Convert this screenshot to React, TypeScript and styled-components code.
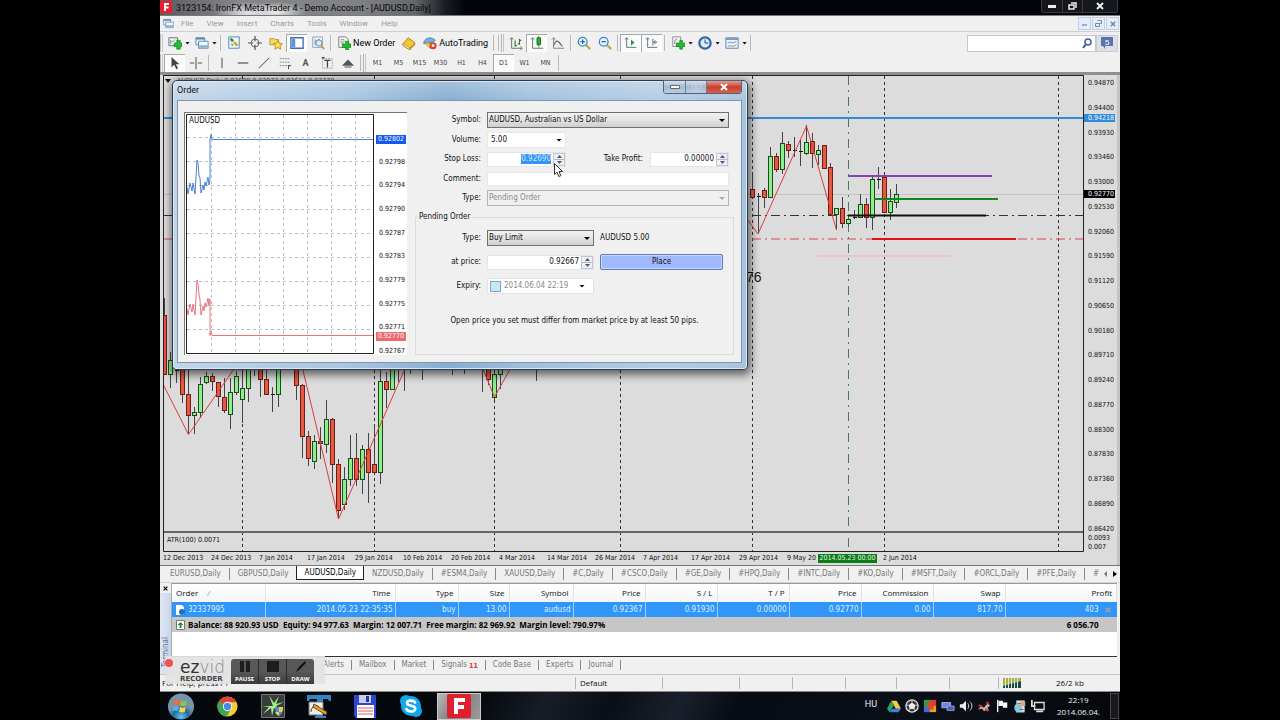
import React, { useEffect, useRef } from "react";
import styled, { createGlobalStyle, css } from "styled-components";

const tahoma = '"DejaVu Sans Condensed", "DejaVu Sans", sans-serif';
const segoe = '"Open Sans", "Noto Sans", sans-serif';
const menuFont = 'Roboto, "Open Sans", sans-serif';

const GlobalStyle = createGlobalStyle`
  *, *::before, *::after { box-sizing: border-box; }
  body { margin: 0; background: #000; }
  button, input, select { font: inherit; color: inherit; margin: 0; padding: 0; border: 0; border-radius: 0; outline: 0; background: none; }
  button { cursor: pointer; }
  svg { display: block; }
`;

const Desktop = styled.div`
  position: relative;
  display: flex;
  flex-direction: column;
  width: 75%;
  min-height: 100vh;
  margin: 0 auto;
  overflow: hidden;
  background: #f0f0f0;
  color: #111;
  font: 8px/10px ${tahoma};
`;

/* ---------- application frame ---------- */

const TitleBar = styled.header`
  display: flex;
  align-items: center;
  height: 16px;
  border-bottom: 1px solid #77797d;
  background:
    radial-gradient(ellipse 34px 11px at 88px 13px, #e8e4e6, transparent),
    radial-gradient(ellipse 30px 10px at 116px 12px, #f0f0f0, transparent),
    linear-gradient(90deg, #5d5d60 0, #85868a 80px, #808185 200px, #64666b 255px, #1b1d22 285px, #020409 305px);
`;
const AppMark = styled.svg`
  width: 12px;
  height: 12px;
  margin: 0 4px 1px 0;
`;
const AppTitle = styled.h1`
  flex: 1;
  margin: 0;
  font: 9px/12px ${menuFont};
  color: #050505;
  white-space: nowrap;
`;
const Captions = styled.div`
  display: flex;
  height: 13px;
  align-self: flex-start;
  margin-right: 2px;
  border: 1px solid #3a3c42;
  border-top: 0;
  border-radius: 0 0 3px 3px;
  background: #15171c;
`;
const CaptionButton = styled.button<{ $wide?: boolean }>`
  display: grid;
  place-items: center;
  width: ${(p) => (p.$wide ? 35 : 20)}px;
  & + & { border-left: 1px solid #3a3c42; }
`;

const MenuBar = styled.nav`
  display: flex;
  align-items: center;
  height: 16px;
  padding: 0 1px 0 3px;
  border-bottom: 1px solid #cfcfcf;
  font: 8px/12px ${menuFont};
  color: #9a9a9a;
`;
const MenuItem = styled.button`
  padding: 0 6px 0 7px;
`;
const Grow = styled.div`
  flex: 1;
`;
const ChildButton = styled.button`
  display: grid;
  place-items: center;
  width: 13px;
  height: 13px;
  margin-left: 1px;
  border: 1px solid #bcd0e4;
  background: #e4eefa;
`;

const ToolBar = styled.div`
  display: flex;
  align-items: center;
  height: 20px;
  padding-top: 2px;
`;
const Grip = styled.i`
  width: 4px;
  height: 18px;
  border-left: 1px solid #b4b4b4;
  background: linear-gradient(90deg, #f0f0f0 1px, #c6c6c6 1px, #c6c6c6 2px, #f0f0f0 2px);
`;
const Divider = styled.i`
  width: 1px;
  height: 16px;
  margin: 0 2px;
  background: #b9b9b9;
`;
const Tool = styled.button<{ $on?: boolean }>`
  display: flex;
  align-items: center;
  justify-content: center;
  min-width: 21px;
  height: 18px;
  ${(p) => p.$on && css`
    background: #fafafa;
    box-shadow: inset 1px 1px #a8a8a8, inset -1px -1px #fff;
  `}
`;
const LabelledTool = styled(Tool)`
  padding: 0 3px 0 4px;
  gap: 2px;
  font: 9px/12px ${menuFont};
  color: #000;
`;
const LetterTool = styled(Tool)`
  font: 700 9px/12px ${menuFont};
  color: #555;
`;
const Period = styled(Tool)`
  font: 7px/10px ${tahoma};
  color: #444;
`;
const Caret = styled.i`
  width: 5px;
  height: 3px;
  margin: 0 1px 0 0;
  background: #111;
  clip-path: polygon(0 0, 100% 0, 50% 100%);
`;
const Search = styled.label`
  display: flex;
  align-items: center;
  width: 129px;
  height: 17px;
  padding-right: 3px;
  border: 1px solid #c4c8ce;
  background: #fff;
  input { flex: 1; min-width: 0; }
`;
const Chat = styled.button`
  display: grid;
  place-items: center;
  width: 22px;
  height: 17px;
  margin-right: 2px;
  background: #dcdfe5;
  border: 1px solid #c9ccd2;
`;

/* ---------- price chart ---------- */

const Workspace = styled.main`
  display: grid;
  grid-template-columns: minmax(0, 1fr) 33px;
  padding: 0 3px;
  border-top: 3px solid #8e8e8e;
  background: linear-gradient(90deg, #dcdcdc 50%, #c4c4c4 50%);
`;
const Plot = styled.svg`
  width: 100%;
  height: 477px;
  background: #dcdcdc;
`;
const PriceAxis = styled.div`
  position: relative;
  display: flex;
  flex-direction: column;
  justify-content: space-between;
  height: 477px;
  padding: 4px 0 1px 4px;
  background: #dcdcdc;
  font: 7px/8px ${tahoma};
`;
const PriceScale = styled.div`
  display: flex;
  flex-direction: column;
  justify-content: space-between;
  height: 454px;
`;
const PriceFlag = styled.output<{ $top: number; $color: string }>`
  position: absolute;
  left: 0;
  right: 2px;
  top: ${(p) => p.$top}px;
  padding-left: 4px;
  background: ${(p) => p.$color};
  color: #f4f8ff;
`;
const TimeAxis = styled.div`
  position: relative;
  grid-column: 1 / -1;
  display: grid;
  grid-template-columns: repeat(16, 48px);
  height: 13px;
  background: #dcdcdc;
  font: 7px/13px ${tahoma};
  white-space: nowrap;
`;
const TimeFlag = styled.output`
  position: absolute;
  left: 655px;
  top: 2px;
  width: 59px;
  background: #0b7d16;
  color: #e6f5e6;
  text-align: center;
  line-height: 9px;
`;

const ChartTabs = styled.nav`
  display: flex;
  align-items: center;
  height: 18px;
  border-top: 1px solid #777;
  border-bottom: 1px solid #d5d5d5;
  padding-left: 2px;
  overflow: hidden;
  white-space: nowrap;
`;
const ChartTab = styled.button<{ $active?: boolean }>`
  flex: none;
  height: 12px;
  padding: 0 8px;
  color: #777;
  border-right: 1px solid #888;
  ${(p) => p.$active && css`
    align-self: flex-start;
    height: 14px;
    margin-left: -1px;
    padding: 0 7px;
    color: #000;
    background: #fff;
    border: solid #222;
    border-width: 0 1px 1px;
  `}
`;
const TabMore = styled.div`
  display: flex;
  align-items: center;
  gap: 5px;
  padding-left: 8px;
  color: #777;
`;

/* ---------- terminal ---------- */

const Terminal = styled.section`
  display: flex;
  height: 91px;
  padding-right: 3px;
`;
const TerminalSide = styled.div`
  display: flex;
  flex-direction: column;
  align-items: center;
  width: 12px;
  background: linear-gradient(90deg, #dfe7f2, #c9d6e8);
  border-right: 1px solid #aaa;
  span {
    margin-top: 44px;
    writing-mode: vertical-rl;
    transform: rotate(180deg);
    color: #54709a;
  }
`;
const CloseMini = styled.button`
  width: 11px;
  height: 10px;
  background: #f0f0f0;
  display: grid;
  place-items: center;
`;
const TerminalBody = styled.div`
  flex: 1;
  min-width: 0;
  display: flex;
  flex-direction: column;
`;
const TableArea = styled.div`
  flex: 1;
  background: #fff;
  border-top: 1px solid #999;
  border-bottom: 1px solid #333;
`;
const Trades = styled.table`
  width: 100%;
  table-layout: fixed;
  border-collapse: collapse;
  white-space: nowrap;
  th, td { padding: 0 4px; text-align: right; }
  th { height: 18px; font: 8px/12px ${segoe}; background: linear-gradient(#fff, #f4f5f7); border-right: 1px solid #e2e4e8; }
  th:first-child, td:first-child { text-align: left; }
  tbody td { height: 15px; padding-right: 2px; background: #3096fa; color: #dcefff; border-right: 1px solid #9fd0ff; }
  tfoot td { height: 15px; background: #c6c6c6; color: #000; font: 700 8px/12px ${segoe}; }
  tbody td:last-child, tfoot td:last-child { border: 0; padding-right: 6px; }
  tfoot td:last-child { padding-right: 18px; }
`;
const Iconed = styled.span`
  display: flex;
  align-items: center;
  gap: 3px;
`;
const ProfitCell = styled.span`
  display: flex;
  justify-content: flex-end;
  align-items: center;
  gap: 6px;
`;
const SortMark = styled.i`
  margin-left: 9px;
  color: #999;
`;
const TerminalTabs = styled.nav`
  display: flex;
  align-items: center;
  height: 17px;
  padding: 0 0 2px 144px;
  color: #777;
  white-space: nowrap;
`;
const TerminalTab = styled.button`
  height: 10px;
  padding: 0 7px;
  border-right: 1px solid #888;
  sub { margin-left: 2px; font-size: 7px; font-weight: 700; color: #d33; vertical-align: -1px; line-height: 7px; }
`;

const StatusBar = styled.footer`
  display: grid;
  grid-template-columns: 415px 87px 77px 53px 53px 51px 53px 49px 1fr;
  align-items: center;
  height: 18px;
  border-top: 1px solid #c4c4c4;
  border-bottom: 1px solid #888;
  font: 8px/12px ${segoe};
`;
const StatusCell = styled.div`
  display: flex;
  align-items: center;
  gap: 35px;
  height: 12px;
  padding-left: 4px;
  & + & { border-left: 1px solid #b5b5b5; }
`;
const StatusHelp = styled(StatusCell)`
  padding-left: 2px;
  border-left: 0;
`;

/* ---------- taskbar ---------- */

const TaskBar = styled.footer`
  display: flex;
  align-items: center;
  flex: 1;
  min-height: 28px;
  background: linear-gradient(115deg, #05080d 0 33%, #171c26 40%, #0a0e16 47%, #1a202b 54%, #070b13 60%, #0b1019 82%, #05070a);
  color: #eee;
  font: 8px/12px ${segoe};
`;
const TaskButton = styled.button<{ $on?: boolean }>`
  display: grid;
  place-items: center;
  width: 46px;
  height: 27px;
  &:first-child { width: 41px; margin-right: 3px; }
  ${(p) => p.$on && css`
    width: 44px;
    margin-left: 3px;
    background: linear-gradient(120deg, #b9b9b9, #808080 45%, #9a9a9a);
    border: 1px solid #ccc;
  `}
`;
const Tray = styled.div`
  display: flex;
  align-items: center;
  gap: 4px;
`;
const Language = styled.span`
  margin-right: 6px;
  padding-bottom: 4px;
  font: 9px/12px ${menuFont};
`;
const Clock = styled.time`
  width: 64px;
  padding: 0 0 1px 3px;
  text-align: center;
`;
const ShowDesktop = styled.button`
  width: 9px;
  height: 26px;
  margin: 0 1px;
  border: 1px solid #444;
  background: #17191d;
`;

/* ---------- order dialog ---------- */

const Dialog = styled.section`
  position: absolute;
  left: 12px;
  top: 80px;
  width: 576px;
  height: 290px;
  display: flex;
  flex-direction: column;
  padding: 0 5px 6px 4px;
  border: 1px solid #2e3a4a;
  border-radius: 5px 5px 4px 4px;
  background:
    linear-gradient(rgba(255,255,255,.25), transparent 20px),
    linear-gradient(90deg, #c3d5e8, #a9c6e2 30%, #86aed2 48%, #a0c0de 62%, #b5cce4 85%, #a9c4de);
  box-shadow: inset 0 0 0 1px #d9e8f6, 1px 3px 8px 2px rgba(0, 0, 0, 0.55);
`;
const DialogHead = styled.header`
  display: flex;
  justify-content: space-between;
  height: 20px;
  h2 { margin: 2px 0 0; font: 9px/14px ${menuFont}; color: #111; }
`;
const DialogCaptions = styled.div`
  display: flex;
  height: 14px;
  margin-top: -1px;
  border: 1px solid #51637a;
  border-radius: 0 0 3px 3px;
  overflow: hidden;
`;
const DialogButton = styled.button<{ $close?: boolean }>`
  display: grid;
  place-items: center;
  width: ${(p) => (p.$close ? 35 : 21)}px;
  background: ${(p) => (p.$close ? "linear-gradient(#e0a090, #c8402c 50%, #d8604a)" : "linear-gradient(#d6e2ee, #a5bad0 50%, #bccde0)")};
  & + & { border-left: 1px solid #6c7f95; }
`;
const Client = styled.div`
  flex: 1;
  display: flex;
  gap: 6px;
  padding: 11px 7px 7px 6px;
  border: 1px solid #8296ab;
  background: #f0f0f0;
`;
const TickPanel = styled.div`
  display: flex;
  width: 223px;
  background: #fff;
  border-top: 1px solid #777;
  border-left: 1px solid #777;
`;
const TickAxis = styled.div`
  position: relative;
  flex: 1;
  display: flex;
  flex-direction: column;
  justify-content: space-between;
  padding: 21px 0 0 3px;
  font: 7px/8px ${tahoma};
`;
const TickFlag = styled(PriceFlag)`
  right: 1px;
  padding-left: 2px;
  line-height: 9px;
`;
const Form = styled.form`
  flex: 1;
  display: flex;
  flex-direction: column;
`;
const MainFields = styled.div`
  display: flex;
  flex-direction: column;
  justify-content: space-between;
  height: 94px;
`;
const Row = styled.div<{ $label: number }>`
  display: flex;
  align-items: center;
  height: 16px;
  padding-right: 5px;
  > label:first-child {
    width: ${(p) => p.$label}px;
    margin-right: 6px;
    text-align: right;
  }
`;
const Picker = styled.span<{ $width?: number; $flat?: boolean; $off?: boolean }>`
  position: relative;
  display: flex;
  ${(p) => (p.$width ? `width: ${p.$width}px;` : "flex: 1;")}
  height: 16px;
  border: 1px solid ${(p) => (p.$flat ? "#e8e8e8" : p.$off ? "#b5b5b5" : "#707070")};
  background: ${(p) => (p.$flat ? "#fff" : p.$off ? "#f0f0f0" : "linear-gradient(#f2f2f2, #e4e4e4 50%, #cfcfcf)")};
  color: ${(p) => (p.$off ? "#8a8a8a" : "#111")};
  select { appearance: none; flex: 1; min-width: 0; padding-left: ${(p) => (p.$flat ? 3 : 1)}px; opacity: 1; color: inherit; }
  &::after {
    content: "";
    position: absolute;
    right: 3px;
    top: 6px;
    width: 6px;
    height: 3px;
    background: ${(p) => (p.$off ? "#aaa" : "#000")};
    clip-path: polygon(0 0, 100% 0, 50% 100%);
    pointer-events: none;
  }
`;
const TextField = styled.input`
  flex: 1;
  min-width: 0;
  height: 14px;
  background: #fff;
  border: 1px solid #e6e6e6;
`;
const NumberField = styled.span<{ $width: number }>`
  display: flex;
  width: ${(p) => p.$width}px;
  height: 15px;
  background: #fff;
  border: 1px solid #e2e5ea;
  input {
    flex: 1;
    min-width: 0;
    padding-right: 2px;
    text-align: right;
  }
  input::selection { background: #3096fa; color: #cfe6ff; }
`;
const Spin = styled.span`
  display: flex;
  flex-direction: column;
  width: 12px;
  border: 1px solid #c3c7cd;
  background: #eef0f3;
`;
const SpinButton = styled.button`
  flex: 1;
  display: grid;
  place-items: center;
  & + & { border-top: 1px solid #b4b8c0; }
`;
const SideLabel = styled.label`
  flex: 1;
  margin-right: 7px;
  text-align: right;
`;
const Pending = styled.fieldset`
  flex: 1;
  display: flex;
  flex-direction: column;
  gap: 8px;
  min-width: 0;
  margin: 6px 0 0 2px;
  padding: 8px 0 0;
  border: 1px solid #dadada;
  legend { margin-left: 2px; padding: 0 1px; }
`;
const RowNote = styled.span`
  margin-left: 6px;
`;
const PlaceButton = styled.button`
  width: 123px;
  height: 16px;
  margin-left: 6px;
  border: 1px solid #5f7bb5;
  border-radius: 2px;
  background: #9fb9fb;
  box-shadow: inset 0 0 0 1px #c4d4fd;
`;
const DateField = styled.span`
  position: relative;
  display: flex;
  align-items: center;
  width: 107px;
  height: 16px;
  padding-left: 2px;
  background: #fff;
  border: 1px solid #e4e4e4;
  color: #8a8a8a;
  input[type="checkbox"] {
    appearance: none;
    width: 11px;
    height: 11px;
    margin-right: 3px;
    border: 1px solid #7aa7c4;
    background: #c9e6f6;
  }
  input[type="text"] { width: 64px; }
`;
const DateCaret = styled(Caret)`
  width: 6px;
  margin-left: 11px;
`;
const Hint = styled.p`
  margin: 14px 0 0;
  text-align: center;
`;
const Pointer = styled.svg`
  position: absolute;
  left: 394px;
  top: 163px;
`;

/* ---------- screen recorder overlay ---------- */

const Recorder = styled.aside`
  position: absolute;
  left: 5px;
  top: 656px;
  display: flex;
  justify-content: space-between;
  width: 160px;
  height: 28px;
  padding: 3px 11px 0 0;
  background: rgba(226, 226, 226, 0.94);
`;
const RecorderDot = styled.i`
  width: 8px;
  height: 8px;
  border-radius: 50%;
  background: #f25055;
`;
const RecorderBrand = styled.div`
  flex: 1;
  padding-left: 7px;
  color: #333;
  font: 17px/17px "DejaVu Sans", sans-serif;
  span { font-weight: 200; color: #888; }
  small { display: block; font: 700 7px/6px "DejaVu Sans", sans-serif; color: #444; }
`;
const RecorderKeys = styled.div`
  display: flex;
  width: 83px;
  border-radius: 3px 3px 0 0;
  background: linear-gradient(#585858 50%, #3c3c3c);
`;
const RecorderKey = styled.button`
  flex: 1;
  display: flex;
  flex-direction: column;
  align-items: center;
  justify-content: space-between;
  padding-top: 1px;
  color: #fff;
  font: 700 6px/10px ${segoe};
  & + & { border-left: 1px solid #2c2c2c; }
`;

/* ---------- icons ---------- */

const glyphs: Record<string, React.ReactNode> = {
  newChart: <><path d="M1 2h10v9H1z" fill="#eef5ee" stroke="#667" /><path d="M3 9V5l2 2 3-3" stroke="#39a" fill="none" /><path d="M7 8h3V5h4v3h2v4h-2v3h-4v-3H7z" fill="#1dc02c" stroke="#0a7616" strokeWidth=".7" /></>,
  windows: <><path d="M1 2h10v8H1z" fill="#e8f2fc" stroke="#5b83ad" /><path d="M1 3h10" stroke="#5b83ad" strokeWidth="2" /><path d="M4 6h11v8H4z" fill="#f2f8ff" stroke="#5b83ad" /><path d="M4 12h11" stroke="#8fb3d6" strokeWidth="3" /></>,
  market: <><path d="M2 1h12v13H2z" fill="#eaf4fd" stroke="#4a84b8" /><path d="M4 3l3 3" stroke="#2b9a3a" strokeWidth="3" /><path d="M8 7l4 4" stroke="#d5a622" strokeWidth="3" /><path d="M5 9l2 2" stroke="#7db86a" strokeWidth="2" /></>,
  target: <g stroke="#555" fill="none"><circle cx="8" cy="8" r="4.5" /><path d="M8 0v6M8 10v6M0 8h6M10 8h6" strokeWidth="1.4" /></g>,
  star: <><path d="M1 3h5l1 1h4v6H1z" fill="#f6d873" stroke="#b9922a" /><path d="M10 5l1.6 3.3 3.7.5-2.7 2.5.7 3.7-3.3-1.8L6.700 15l.7-3.700-2.700-2.500 3.700-.5z" fill="#ffdf4a" stroke="#b88a1c" /></>,
  panel: <><path d="M1 2h14v12H1z" fill="#fff" stroke="#3b72ad" strokeWidth="1.500" /><path d="M2 3h4v10H2z" fill="#5a95d3" /></>,
  tester: <><path d="M2 1h11v12H2z" fill="#eef3f8" stroke="#8b9bb0" /><path d="M4 4h2v6H4zM8 3h2v4H8z" fill="#9ab" /><circle cx="9" cy="8" r="3.500" fill="#dcecf9" stroke="#5d7fa3" /><path d="M11.500 10.500L15 15" stroke="#c69b3c" strokeWidth="2" /></>,
  order: <><path d="M2 1h8l3 3v9H2z" fill="#f4f7f4" stroke="#777" /><path d="M4 4h4M4 6h6M4 8h4" stroke="#999" /><path d="M6 9h4V6h3v3h3v4h-3v3h-3v-3H6z" fill="#1dc02c" stroke="#0a7616" strokeWidth=".7" /></>,
  book: <><path d="M1 9L7 2l8 6-6 6z" fill="#f3c63a" stroke="#a97b13" /><path d="M1 9v2l8 5v-2" fill="#fbe9ad" stroke="#a97b13" /><path d="M9 14l6-6v2l-6 6z" fill="#c98e18" /></>,
  auto: <><path d="M1 7c2-6 10-6 13-2l-3 2-10 2z" fill="#6fb4e8" stroke="#3a79ad" /><path d="M2 8l6 6 3-6z" fill="#f2cf58" stroke="#b08c2a" /><circle cx="11.500" cy="11" r="4" fill="#e03a2c" /><path d="M10 9.500h3v3h-3z" fill="#fff" /></>,
  bars: <g stroke="#556b56" fill="none"><path d="M3 2v12h12M1 4l2-2 2 2M13 12l2 2-2 2" /><path d="M7 5v7M7 11h2M12 3v7M12 5h2M10 9h2" stroke="#2d7a35" strokeWidth="1.300" /></g>,
  candles: <><path d="M3 2v12h12M1 4l2-2 2 2M10 0v13" stroke="#556b56" fill="none" /><path d="M8 2h4v8H8z" fill="#25b133" stroke="#0a6e17" /></>,
  line: <g stroke="#777" fill="none"><path d="M3 2v12h12M1 4l2-2 2 2" /><path d="M3 11c3-8 5-6 10 1" stroke="#4f7a55" strokeWidth="1.300" /></g>,
  zoomIn: <><path d="M10 10l5 5" stroke="#c9a24a" strokeWidth="2.500" /><circle cx="6.500" cy="6.500" r="5" fill="#e6f3fd" stroke="#3d86c8" strokeWidth="1.500" /><path d="M4 6.500h5M6.500 4v5" stroke="#2f6cae" strokeWidth="1.500" /></>,
  zoomOut: <><path d="M10 10l5 5" stroke="#c9a24a" strokeWidth="2.500" /><circle cx="6.500" cy="6.500" r="5" fill="#e6f3fd" stroke="#3d86c8" strokeWidth="1.500" /><path d="M4 6.500h5" stroke="#2f6cae" strokeWidth="1.500" /></>,
  scroll: <><path d="M3 2v11h11M1 4l2-2 2 2" stroke="#567" fill="none" /><path d="M8 4v7l4-3.500z" fill="#25a133" /></>,
  shift: <><path d="M3 2v11h11M1 4l2-2 2 2M9 3v8" stroke="#567" fill="none" /><path d="M14 7h-4M12 5l-2 2 2 2" stroke="#456" fill="none" /></>,
  indicators: <><path d="M2 1h9v11H2z" fill="#f4f4f4" stroke="#888" /><path d="M4 9c1-6 2-6 3-5" stroke="#666" fill="none" /><path d="M6 8h4V5h3v3h3v4h-3v3h-3v-3H6z" fill="#1dc02c" stroke="#0a7616" strokeWidth=".7" /></>,
  clock: <><circle cx="8" cy="8" r="6.500" fill="#dcecf9" stroke="#2f66a5" strokeWidth="2.500" /><path d="M8 4v4h4" stroke="#234" fill="none" /></>,
  template: <><path d="M1 2h14v12H1z" fill="#eef4fa" stroke="#5d7ea3" /><path d="M1 3.500h14" stroke="#6f95bd" strokeWidth="2" /><path d="M3 8l3-1 3 1 4-2M3 12l3-1 3 1 4-2" stroke="#789" fill="none" /></>,
  cursor: <path d="M4 1v12l3-3 2.500 5 2-1L9 9.500h4z" fill="#444" />,
  cross: <path d="M8 1v14M1 8h5M10 8h5" stroke="#555" strokeWidth="1.200" />,
  vline: <path d="M8 2v12" stroke="#555" strokeWidth="1.200" />,
  hline: <path d="M2 8h12" stroke="#555" strokeWidth="1.400" />,
  trend: <path d="M2 14L14 2" stroke="#666" strokeWidth="1.200" />,
  fib: <><path d="M2 3h12M2 7h12M2 11h12" stroke="#777" strokeDasharray="2 1" /><path d="M12 15v-4l3 0" stroke="#333" fill="none" /></>,
  label: <><path d="M3 3h11v11H3z" fill="none" stroke="#999" strokeDasharray="2 1" /><path d="M5 5h7M8.500 5v8M2 2h3" stroke="#444" strokeWidth="1.500" /></>,
  arrows: <path d="M1 11l7-7 7 7zM4 12h8v1H4z" fill="#555" />,
};

const Icon = ({ name, size = 14 }: { name: string; size?: number }) => (
  <svg width={size} height={size} viewBox="0 0 16 16" aria-hidden="true">{glyphs[name]}</svg>
);

const XMark = ({ size, color, width = 2 }: { size: number; color: string; width?: number }) => (
  <svg width={size} height={size} viewBox="0 0 8 8"><path d="M1 1l6 6M7 1L1 7" stroke={color} strokeWidth={width} /></svg>
);

/* ---------- data ---------- */

type Candle = [x: number, high: number, top: number, bottom: number, low: number, kind: "u" | "d"];

const candles: Candle[] = [
  [164, 298, 315, 374, 374, "d"], [170, 352, 360, 374, 388, "u"], [176, 360, 370, 370, 383, "u"],
  [182, 366, 368, 394, 403, "d"], [188, 368, 394, 415, 434, "d"], [194, 407, 412, 415, 434, "u"],
  [200, 377, 384, 412, 418, "u"], [206, 372, 376, 382, 384, "u"], [212, 373, 376, 381, 391, "d"],
  [218, 382, 382, 396, 407, "d"], [224, 378, 397, 410, 413, "d"], [230, 378, 392, 414, 429, "u"],
  [236, 371, 376, 392, 395, "u"], [242, 368, 388, 399, 423, "u"], [248, 362, 365, 388, 402, "u"],
  [254, 362, 368, 368, 376, "u"], [260, 360, 365, 379, 397, "d"], [266, 370, 379, 394, 395, "d"],
  [272, 387, 394, 394, 412, "d"], [278, 362, 366, 394, 407, "u"], [296, 360, 362, 385, 400, "d"],
  [302, 384, 385, 436, 458, "d"], [308, 431, 436, 458, 466, "d"], [314, 435, 441, 461, 469, "u"],
  [320, 427, 441, 443, 459, "d"], [326, 400, 419, 444, 453, "u"], [332, 418, 419, 464, 483, "d"],
  [338, 459, 464, 510, 519, "d"], [344, 467, 479, 504, 510, "u"], [350, 435, 458, 479, 486, "u"],
  [356, 433, 458, 479, 486, "d"], [362, 445, 449, 479, 494, "u"], [368, 433, 449, 472, 503, "d"],
  [374, 426, 464, 472, 474, "d"], [380, 370, 381, 472, 484, "u"], [386, 372, 381, 389, 408, "d"],
  [392, 362, 365, 389, 390, "u"], [398, 362, 366, 366, 382, "u"], [404, 362, 366, 366, 391, "u"],
  [410, 362, 366, 366, 374, "u"], [422, 362, 366, 366, 380, "u"], [452, 362, 366, 366, 375, "u"],
  [464, 362, 366, 366, 374, "u"], [482, 362, 366, 366, 392, "u"], [488, 364, 366, 379, 385, "d"],
  [494, 372, 374, 397, 400, "u"], [500, 362, 366, 374, 389, "u"], [536, 362, 366, 366, 381, "u"],
  [752, 173, 189, 197, 198, "d"], [758, 193, 196, 196, 233, "u"], [764, 188, 190, 197, 208, "d"],
  [770, 147, 156, 197, 198, "u"], [776, 153, 156, 169, 172, "d"], [782, 132, 143, 169, 174, "u"],
  [788, 141, 144, 150, 158, "d"], [794, 137, 150, 150, 157, "u"], [800, 139, 151, 151, 166, "u"],
  [806, 125, 142, 153, 155, "u"], [812, 133, 141, 153, 168, "d"], [818, 145, 150, 154, 165, "u"],
  [824, 145, 145, 168, 169, "d"], [830, 163, 167, 214, 215, "d"], [836, 208, 208, 214, 230, "u"],
  [842, 197, 208, 223, 228, "d"], [848, 218, 219, 223, 226, "u"], [854, 210, 217, 217, 219, "u"],
  [860, 194, 204, 217, 218, "u"], [866, 198, 204, 217, 228, "d"], [872, 176, 179, 217, 230, "u"],
  [878, 167, 179, 179, 189, "u"], [884, 176, 177, 212, 213, "d"], [890, 189, 201, 212, 220, "u"],
  [896, 184, 194, 202, 208, "u"],
];

const prices = ["0.94870", "0.94400", "0.93930", "0.93460", "0.93000", "0.92530", "0.92060", "0.91590", "0.91120", "0.90650", "0.90180", "0.89710", "0.89240", "0.88770", "0.88300", "0.87830", "0.87360", "0.86890", "0.86420"];
const dates = ["12 Dec 2013", "24 Dec 2013", "7 Jan 2014", "17 Jan 2014", "29 Jan 2014", "10 Feb 2014", "20 Feb 2014", "4 Mar 2014", "14 Mar 2014", "26 Mar 2014", "7 Apr 2014", "17 Apr 2014", "29 Apr 2014", "9 May 20", "", "2 Jun 2014"];
const months = [242, 374, 494, 620, 752, 884, 1058];
const tabs = ["EURUSD", "GBPUSD", "AUDUSD", "NZDUSD", "#ESM4", "XAUUSD", "#C", "#CSCO", "#GE", "#HPQ", "#INTC", "#KO", "#MSFT", "#ORCL", "#PFE"];
const tickPrices = ["0.92802", "0.92798", "0.92794", "0.92790", "0.92787", "0.92783", "0.92779", "0.92775", "0.92771", "0.92767"];
const columns: [string, number | undefined][] = [["Order", 93], ["Time", 130], ["Type", 63], ["Size", 51], ["Symbol", 64], ["Price", 72], ["S / L", 72], ["T / P", 72], ["Price", 72], ["Commission", 72], ["Swap", 72], ["Profit", undefined]];
const trade = ["2014.05.23 22:35:35", "buy", "13.00", "audusd", "0.92367", "0.91930", "0.00000", "0.92770", "0.00", "817.70"];

/* ---------- pieces ---------- */

const PriceChart = () => (
  <Plot viewBox="163 75 921 477" preserveAspectRatio="xMinYMin meet" role="img" aria-label="AUDUSD daily chart">
    <g stroke="#333" strokeDasharray="3 3" fill="none">
      {months.map((x) => <path key={x} d={`M${x}.5 76V551`} />)}
    </g>
    <path d="M848.500 76V551" stroke="#4a7a5c" strokeDasharray="9 5 2 5" />
    <path d="M163 194.500H1084" stroke="#c2c2c2" />
    <path d="M163 118H1084" stroke="#2f8bdc" strokeWidth="2" />
    <path d="M163 215.500H1084" stroke="#333" strokeDasharray="9 4 2 4" />
    <path d="M163 239H1084" stroke="#d8494c" strokeDasharray="9 4 2 4" />
    <path d="M817 256H951" stroke="#f6bfca" strokeWidth="2" />
    <g stroke="#444" shapeRendering="crispEdges">
      {candles.map(([x, h, t, b, l, k]) => (
        <g key={`${x}-${h}`}>
          <path d={`M${x + 0.5} ${h}V${l}`} />
          {b - t < 1
            ? <path d={`M${x - 1} ${t + 0.5}h4`} stroke="#111" />
            : <rect x={x - 1.5} y={t + 0.5} width="4" height={b - t} fill={k === "u" ? "#8cf08a" : "#e8573f"} stroke={k === "u" ? "#1d4a1d" : "#6a2018"} />}
        </g>
      ))}
    </g>
    <g stroke="#dd3b3f" fill="none">
      <path d="M163 384L188.500 434.500L236 366" />
      <path d="M301 362L338.500 519L408 362" />
      <path d="M480 362L494.500 397L514 362" />
      <path d="M744 215L758 234L806.500 126L836.500 230" />
    </g>
    <g strokeWidth="2">
      <path d="M848 176H992" stroke="#8840b8" />
      <path d="M874 199H998" stroke="#12881c" />
      <path d="M848 215.500H986" stroke="#111" />
      <path d="M872 239H1016" stroke="#e0101c" />
    </g>
    <text x="746" y="282" fontFamily="Liberation Sans, sans-serif" fontSize="14" fill="#111">76</text>
    <text x="177" y="83" fontFamily="DejaVu Sans Condensed, sans-serif" fontSize="7" fill="#555">AUDUSD,Daily  0.92699 0.92977 0.92611 0.92770</text>
    <path d="M165 79h6l-3 4z" fill="#111" />
    <path d="M163 532H1084" stroke="#666" strokeWidth="2" />
    <text x="167" y="542" fontFamily="DejaVu Sans Condensed, sans-serif" fontSize="7" fill="#111">ATR(100) 0.0071</text>
    <path d="M163.500 551.500V75.500H1083.500V551.500z" stroke="#222" fill="none" />
  </Plot>
);

const TickChart = () => (
  <svg width="191" height="242" viewBox="0 0 191 242" role="img" aria-label="AUDUSD tick chart">
    <g stroke="#bdbdc4" strokeDasharray="3 3">
      {[26, 50, 74, 98, 122, 146, 170].map((x) => <path key={x} d={`M${x}.5 2V240`} />)}
      {[24, 48, 72, 96, 120, 144, 168, 192, 216].map((y) => <path key={y} d={`M2 ${y}.5H189`} />)}
    </g>
    <path d="M2 74l1 7 2-11 2 8 1-8 2 11 2-34 1 3 1 13 1 2 1 15 2-8 1 5 1-8 1 4 2-9 1 8 1-5V26.500l1-5 1 5H189" fill="none" stroke="#4a82d8" />
    <path d="M2 196l1 6 2-11 2 8 1-8 2 11 2-35 1 4 1 10 1 6 1 15 2-9 1 5 1-8 1 4 2-9 1 8 1-7V222.500l1-4 1 4H189" fill="none" stroke="#e8777c" />
    <path d="M1.500 1.500H188.500V240.500H1.500z" fill="none" stroke="#222" />
    <text x="4" y="10" fontFamily="DejaVu Sans Condensed, sans-serif" fontSize="8" fill="#111">AUDUSD</text>
  </svg>
);

const Spinner = () => (
  <Spin>
    <SpinButton type="button" aria-label="Increase"><svg width="5" height="3"><path d="M0 3h5L2.500 0z" fill="#4a5a7a" /></svg></SpinButton>
    <SpinButton type="button" aria-label="Decrease"><svg width="5" height="3"><path d="M0 0h5L2.500 3z" fill="#4a5a7a" /></svg></SpinButton>
  </Spin>
);

const OrderDialog = () => {
  const stopLoss = useRef<HTMLInputElement>(null);
  useEffect(() => {
    stopLoss.current?.focus();
    stopLoss.current?.select();
  }, []);
  return (
    <Dialog role="dialog" aria-label="Order">
      <DialogHead>
        <h2>Order</h2>
        <DialogCaptions>
          <DialogButton aria-label="Minimize"><svg width="10" height="4"><path d="M.5.5h9v3h-9z" fill="#fff" stroke="#666" /></svg></DialogButton>
          <DialogButton aria-label="Maximize"><svg width="9" height="7"><path d="M.5.5h8v6h-8zM3.500 2.500h2v2h-2z" fill="none" stroke="#c9d3df" /></svg></DialogButton>
          <DialogButton $close aria-label="Close"><XMark size={8} color="#fff" /></DialogButton>
        </DialogCaptions>
      </DialogHead>
      <Client>
        <TickPanel>
          <TickChart />
          <TickAxis>
            {tickPrices.map((p) => <span key={p}>{p}</span>)}
            <TickFlag $top={22} $color="#1458f0">0.92802</TickFlag>
            <TickFlag $top={219} $color="#f0696c">0.92770</TickFlag>
          </TickAxis>
        </TickPanel>
        <Form onSubmit={(e) => e.preventDefault()}>
          <MainFields>
            <Row $label={68}>
              <label htmlFor="symbol">Symbol:</label>
              <Picker><select id="symbol"><option>AUDUSD, Australian vs US Dollar</option></select></Picker>
            </Row>
            <Row $label={68}>
              <label htmlFor="volume">Volume:</label>
              <Picker $width={79} $flat><select id="volume"><option>5.00</option></select></Picker>
            </Row>
            <Row $label={68}>
              <label htmlFor="sl">Stop Loss:</label>
              <NumberField $width={79}><input id="sl" ref={stopLoss} defaultValue="0.92690" /><Spinner /></NumberField>
              <SideLabel htmlFor="tp">Take Profit:</SideLabel>
              <NumberField $width={79}><input id="tp" defaultValue="0.00000" /><Spinner /></NumberField>
            </Row>
            <Row $label={68}>
              <label htmlFor="comment">Comment:</label>
              <TextField id="comment" />
            </Row>
            <Row $label={68}>
              <label htmlFor="type">Type:</label>
              <Picker $off><select id="type" disabled><option>Pending Order</option></select></Picker>
            </Row>
          </MainFields>
          <Pending>
            <legend>Pending Order</legend>
            <Row $label={65}>
              <label htmlFor="ptype">Type:</label>
              <Picker $width={107}><select id="ptype"><option>Buy Limit</option></select></Picker>
              <RowNote>AUDUSD 5.00</RowNote>
            </Row>
            <Row $label={65}>
              <label htmlFor="price">at price:</label>
              <NumberField $width={107}><input id="price" defaultValue="0.92667" /><Spinner /></NumberField>
              <PlaceButton type="submit">Place</PlaceButton>
            </Row>
            <Row $label={65}>
              <label htmlFor="expiry">Expiry:</label>
              <DateField>
                <input type="checkbox" aria-label="Use expiry" />
                <input type="text" id="expiry" defaultValue="2014.06.04 22:19" />
                <DateCaret />
              </DateField>
            </Row>
            <Hint>Open price you set must differ from market price by at least 50 pips.</Hint>
          </Pending>
        </Form>
      </Client>
    </Dialog>
  );
};

const trayIcons: React.ReactNode[] = [
  <><path d="M5 2h6l5 9h-6z" fill="#f7cb3b" /><path d="M5 2L0 11l3 4 5-8z" fill="#2da562" /><path d="M3 15h10l3-4H6z" fill="#3f7ee0" /></>,
  <><circle cx="8" cy="8" r="7" fill="#333" stroke="#ddd" strokeWidth="1.500" /><path d="M8 4l4 3-1.500 4.500h-5L4 7z" fill="#eee" /><path d="M8 1v3M1 7h3M15 7h-3M4 14l2-3M12 14l-2-3" stroke="#eee" /></>,
  <><path d="M1 1h7v7H1z" fill="#2f9e44" /><path d="M8 1h7v7H8z" fill="#e0392d" /><path d="M1 8h7v7H1z" fill="#3b6fd6" /><path d="M8 8h7v7H8z" fill="#f0a020" /><path d="M5 4h7v8H5z" fill="#d9482d" /></>,
  <><path d="M1 4h10v6H1z" fill="#7387d8" stroke="#a9b6f0" /><path d="M7 8h8v5H7z" fill="#4a5fb8" stroke="#98a8ea" /></>,
  <><path d="M1 6h3l4-4v12l-4-4H1z" fill="#eee" /><path d="M10 5c1.500 2 1.500 4 0 6M12.500 3c3 3 3 7 0 10" stroke="#eee" fill="none" /></>,
  <><path d="M1 12l4-4 3 2 4-5 3 2-3 3 2 4-3-2-3 2-2-3z" fill="#c9b6b4" /><path d="M2 7l4 2M9 12l4 1M12 3v3" stroke="#e0392d" strokeWidth="2.500" /></>,
  <><path d="M3 1v14" stroke="#fff" strokeWidth="1.500" /><path d="M4 2h5v2h5v6H9V8H4z" fill="#fff" /></>,
  <><path d="M4 2h9v13H4z" fill="#dce9f2" stroke="#8aa" /><circle cx="6" cy="10" r="4.500" fill="#8fc3d8" /><path d="M9 3h5v5H9z" fill="#f0a65a" /><path d="M5 5h4M8 12h4" stroke="#456" /></>,
  <><path d="M4 4h11v8H4z" fill="none" stroke="#ddd" strokeWidth="1.500" /><path d="M1 1v7h4M6 14h8" stroke="#ddd" strokeWidth="2" fill="none" /></>,
];

const taskIcons: [string, React.ReactNode][] = [
  ["Start", <svg width="28" height="27" viewBox="0 0 28 28"><defs><radialGradient id="orb" cx=".5" cy=".9"><stop offset="0" stopColor="#5cc8ee" /><stop offset=".6" stopColor="#2d6794" /><stop offset="1" stopColor="#7795a8" /></radialGradient></defs><circle cx="14" cy="14" r="13.500" fill="url(#orb)" /><path d="M7 8c2-1 4-1 6 0l-1 5c-2-1-4-1-6 0z" fill="#f26a35" /><path d="M14 8c2 1 4 1 6 0l-1 5c-2 1-4 1-6 0z" fill="#8dc640" /><path d="M6 14c2-1 4-1 6 0l-1 5c-2-1-4-1-6 0z" fill="#4cb0ee" /><path d="M13 14.500c2 1 4 1 6 0l-1 5c-2 1-4 1-6 0z" fill="#fdd048" /></svg>],
  ["Chrome", <svg width="21" height="21" viewBox="0 0 24 24"><circle cx="12" cy="12" r="11.500" fill="#f5cc30" /><path d="M12 12L2 6.500A11.500 11.500 0 0 1 22.200 7H12z" fill="#dd4437" /><path d="M12 12L2.100 6A11.500 11.500 0 0 0 11 23.500l5-9z" fill="#3ba757" /><circle cx="12" cy="12" r="5.300" fill="#fff" /><circle cx="12" cy="12" r="4.200" fill="#4586e8" /></svg>],
  ["Trading tools", <svg width="24" height="24" viewBox="0 0 24 24"><path d="M.5.500h23v23H.500z" fill="#383c3e" stroke="#777" /><path d="M12 12L8 1l5 8 5-7-3 8 8-2-8 4 6 6-8-4-2 8-1-8-8 6 6-7-7-1z" fill="#a4ee86" /><path d="M14 13h8c0 5-2 8-4 9-2-1-4-4-4-9z" fill="#4d8ed8" /><path d="M18 13h4c0 2 0 3-1 5h-3zM14 18h4v4c-2-1-3-2-4-4z" fill="#e8d04a" /></svg>],
  ["Notes", <svg width="24" height="24" viewBox="0 0 24 24"><path d="M0 1h24v6h-2l-1-2h-5v17h3v2H8v-2h2V5H3L2 7H0z" fill="#3286c8" /><path d="M2 8h14v13H2z" fill="#f0eee8" stroke="#777" /><path d="M4 18c0-6 6-8 8-5" stroke="#444" fill="none" /><path d="M7 10l13 8-1 3-13-8z" fill="#f1a128" stroke="#6a430f" /></svg>],
  ["Total Commander", <svg width="24" height="25" viewBox="0 0 24 25"><path d="M1 1h22v23H3l-2-2z" fill="#2a48d4" /><path d="M6 1h12v8H6z" fill="#c7cee6" /><path d="M13 2h3v6h-3z" fill="#2339a8" /><path d="M4 11h17v13H4z" fill="#fff" /><path d="M5 14h15M5 17h15M5 20h15" stroke="#d86060" /></svg>],
  ["Skype", <svg width="24" height="24" viewBox="0 0 24 24"><circle cx="12" cy="12" r="10" fill="#12a8ec" /><circle cx="7" cy="7" r="6" fill="#12a8ec" /><circle cx="17" cy="17" r="6" fill="#12a8ec" /><path d="M16 8.500c-1-2.500-8-2.800-8 .6 0 3.700 8.300 1.700 8.300 5.600 0 3.800-7.800 3.400-8.800.3" stroke="#fff" strokeWidth="2.600" fill="none" strokeLinecap="round" /></svg>],
  ["MetaTrader", <svg width="24" height="24" viewBox="0 0 24 24"><rect width="24" height="24" rx="2" fill="#e01f2e" /><path d="M7 4h11v4h-7v3h6v4h-6v5H7z" fill="#fff" /></svg>],
];

const T = ({ name, on }: { name: string; on?: boolean }) => <Tool $on={on} aria-label={name}><Icon name={name} /></Tool>;

export default function App() {
  return (
    <Desktop>
      <GlobalStyle />
      <TitleBar>
        <AppMark viewBox="0 0 12 12"><path d="M0 0h12v12H0z" fill="#e8202e" /><path d="M4 2h5v2H6v1.500h2.500v2H6V10H4z" fill="#fff" /></AppMark>
        <AppTitle>3123154: IronFX MetaTrader 4 - Demo Account - [AUDUSD,Daily]</AppTitle>
        <Captions>
          <CaptionButton aria-label="Minimize"><svg width="8" height="3"><path d="M0 0h8v3H0z" fill="#eee" /></svg></CaptionButton>
          <CaptionButton aria-label="Restore"><svg width="9" height="8"><path d="M3 1h5v5M1 3h5v4H1z" fill="none" stroke="#eee" strokeWidth="1.500" /></svg></CaptionButton>
          <CaptionButton $wide aria-label="Close"><XMark size={8} color="#eee" /></CaptionButton>
        </Captions>
      </TitleBar>

      <MenuBar>
        <Icon name="windows" size={11} />
        {["File", "View", "Insert", "Charts", "Tools", "Window", "Help"].map((m) => <MenuItem key={m}>{m}</MenuItem>)}
        <Grow />
        <ChildButton aria-label="Minimize chart"><svg width="5" height="5"><path d="M0 4h5" stroke="#58719a" /></svg></ChildButton>
        <ChildButton aria-label="Restore chart"><svg width="7" height="7"><path d="M2.500.500h4v3h-2M.500 3.500h4v3h-4z" fill="none" stroke="#7488a8" /></svg></ChildButton>
        <ChildButton aria-label="Close chart"><XMark size={6} color="#7488a8" /></ChildButton>
      </MenuBar>

      <ToolBar>
        <Grip />
        <T name="newChart" /><Caret />
        <T name="windows" /><Caret />
        <Divider />
        <T name="market" /><T name="target" /><T name="star" /><T name="panel" on /><T name="tester" />
        <Divider />
        <LabelledTool><Icon name="order" />New Order</LabelledTool>
        <T name="book" />
        <LabelledTool><Icon name="auto" />AutoTrading</LabelledTool>
        <Divider /><Divider /><Grip />
        <T name="bars" /><T name="candles" on /><T name="line" />
        <Divider />
        <T name="zoomIn" /><T name="zoomOut" />
        <Divider />
        <T name="scroll" on /><T name="shift" on />
        <Divider />
        <T name="indicators" /><Caret />
        <T name="clock" /><Caret />
        <T name="template" /><Caret />
        <Divider />
        <Grow />
        <Search aria-label="Search"><input type="text" /><svg width="10" height="11"><circle cx="6" cy="4" r="3" fill="#fff" stroke="#3d5f9d" strokeWidth="1.500" /><path d="M4 6L1 10" stroke="#3d5f9d" strokeWidth="2" /></svg></Search>
        <Chat aria-label="Messages">
          <svg width="14" height="12"><path d="M1 0h12v9H5v3L3 9H1z" fill="#5a74ad" /><text x="5" y="8" fontFamily="Liberation Sans, sans-serif" fontSize="8" fill="#fff">5</text></svg>
        </Chat>
      </ToolBar>
      <ToolBar>
        <Grip />
        <T name="cursor" on /><T name="cross" />
        <Divider />
        <T name="vline" /><T name="hline" /><T name="trend" /><T name="fib" />
        <LetterTool>A</LetterTool>
        <T name="label" /><T name="arrows" />
        <Divider /><Grip />
        {["M1", "M5", "M15", "M30", "H1", "H4", "D1", "W1", "MN"].map((p) => <Period key={p} $on={p === "D1"}>{p}</Period>)}
        <Divider />
      </ToolBar>

      <Workspace>
        <PriceChart />
        <PriceAxis>
          <PriceScale>{prices.map((p) => <span key={p}>{p}</span>)}</PriceScale>
          <span>0.0093</span>
          <span>0.007</span>
          <PriceFlag $top={39} $color="#2f8bdc">0.94218</PriceFlag>
          <PriceFlag $top={115} $color="#000">0.92770</PriceFlag>
        </PriceAxis>
        <TimeAxis>
          {dates.map((d, i) => <span key={i}>{d}</span>)}
          <TimeFlag>2014.05.23 00:00</TimeFlag>
        </TimeAxis>
      </Workspace>

      <ChartTabs>
        {tabs.map((t) => <ChartTab key={t} $active={t === "AUDUSD"}>{t},Daily</ChartTab>)}
        <TabMore><span>#</span>
          <svg width="4" height="6"><path d="M3 0v6L0 3z" fill="#777" /></svg>
          <svg width="4" height="6"><path d="M0 0v6l4-3z" fill="#000" /></svg>
        </TabMore>
      </ChartTabs>

      <Terminal>
        <TerminalSide>
          <CloseMini aria-label="Close terminal"><XMark size={5} color="#111" /></CloseMini>
          <span>Terminal</span>
        </TerminalSide>
        <TerminalBody>
          <TableArea>
            <Trades>
              <colgroup>{columns.map(([n, w], i) => <col key={n + i} width={w} />)}</colgroup>
              <thead>
                <tr>{columns.map(([n], i) => <th key={n + i}>{n}{i === 0 && <SortMark>/</SortMark>}</th>)}</tr>
              </thead>
              <tbody>
                <tr>
                  <td><Iconed><svg width="9" height="10"><path d="M0 0h6l2 2v8H0z" fill="#fff" /><circle cx="6" cy="7" r="3" fill="#2a6fb0" /></svg>32337995</Iconed></td>
                  {trade.map((v, i) => <td key={i}>{v}</td>)}
                  <td><ProfitCell>403<XMark size={6} color="#a9a08e" width={2} /></ProfitCell></td>
                </tr>
              </tbody>
              <tfoot>
                <tr>
                  <td colSpan={11}><Iconed><svg width="9" height="10"><path d="M.500.500h8v9h-8z" fill="#fff" stroke="#777" /><path d="M4.500 2l3 3h-2v3h-2V5h-2z" fill="#169a26" /></svg><span>Balance: 88 920.93 USD&nbsp; Equity: 94 977.63&nbsp; Margin: 12 007.71&nbsp; Free margin: 82 969.92&nbsp; Margin level: 790.97%</span></Iconed></td>
                  <td>6 056.70</td>
                </tr>
              </tfoot>
            </Trades>
          </TableArea>
          <TerminalTabs>
            <TerminalTab>Alerts</TerminalTab><TerminalTab>Mailbox</TerminalTab><TerminalTab>Market</TerminalTab>
            <TerminalTab>Signals<sub>11</sub></TerminalTab><TerminalTab>Code Base</TerminalTab><TerminalTab>Experts</TerminalTab><TerminalTab>Journal</TerminalTab>
          </TerminalTabs>
        </TerminalBody>
      </Terminal>

      <StatusBar>
        <StatusHelp>For Help, press F1</StatusHelp>
        <StatusCell>Default</StatusCell>
        <StatusCell /><StatusCell /><StatusCell /><StatusCell /><StatusCell /><StatusCell />
        <StatusCell>
          <svg width="18" height="10"><path d="M0 0h18v3L0 8z" fill="#a9b23c" /><path d="M18 3v7H0V8z" fill="#1c4a4c" /><path d="M2.500 0v10M5.500 0v10M8.500 0v10M11.500 0v10M14.500 0v10" stroke="#e4e8d8" /></svg>
          26/2 kb
        </StatusCell>
      </StatusBar>

      <TaskBar>
        {taskIcons.map(([n, icon]) => <TaskButton key={n} aria-label={n} $on={n === "MetaTrader"}>{icon}</TaskButton>)}
        <Grow />
        <Tray>
          <Language>HU</Language>
          {trayIcons.map((icon, i) => <svg key={i} width="14" height="14" viewBox="0 0 16 16">{icon}</svg>)}
        </Tray>
        <Clock>22:19<br />2014.06.04.</Clock>
        <ShowDesktop aria-label="Show desktop" />
      </TaskBar>

      <OrderDialog />
      <Pointer width="10" height="15" viewBox="0 0 10 15"><path d="M.500.500v11l2.500-2.300 1.800 4.300 2-.8L5 8.500h3.500z" fill="#fff" stroke="#333" /></Pointer>

      <Recorder>
        <RecorderDot />
        <RecorderBrand>ez<span>vid</span><small>RECORDER</small></RecorderBrand>
        <RecorderKeys>
          <RecorderKey><svg width="12" height="13"><path d="M1 1h4v11H1zM7 1h4v11H7z" fill="#1d1d1d" /></svg>PAUSE</RecorderKey>
          <RecorderKey><svg width="12" height="13"><path d="M0 1h12v11H0z" fill="#1d1d1d" /></svg>STOP</RecorderKey>
          <RecorderKey><svg width="12" height="13"><path d="M1 12l2-4 7-7 1 2-7 7z" fill="#111" /></svg>DRAW</RecorderKey>
        </RecorderKeys>
      </Recorder>
    </Desktop>
  );
}
